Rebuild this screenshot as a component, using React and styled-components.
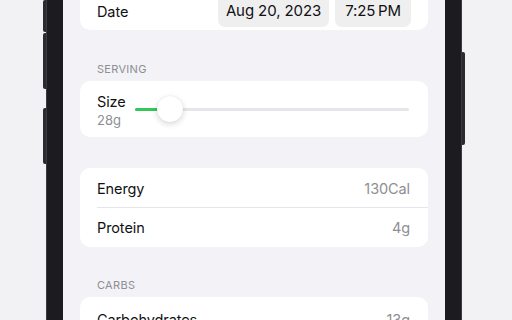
import React from 'react';
import styled, { createGlobalStyle } from 'styled-components';

const GlobalStyle = createGlobalStyle`
    html, body {
        margin: 0;
        padding: 0;
        background-color: #f2f2f4;
    }
    body {
        font-family: Inter, "Noto Sans", "Liberation Sans", sans-serif;
        -webkit-font-smoothing: antialiased;
    }
`;

const Page = styled.div`
    width: 512px;
    height: 320px;
    overflow: hidden;
    display: flex;
    justify-content: flex-start;
    padding-left: 43px;
    box-sizing: border-box;
    background-color: #f2f2f4;
`;

const Rail = styled.div`
    display: flex;
    flex-direction: column;
    width: 3px;
`;

const RailButton = styled.div`
    width: 3px;
    height: ${props => props.size}px;
    margin-top: ${props => props.gap}px;
    background-color: #2a2a2f;
    border-radius: ${props => (props.side === 'left' ? '2px 0 0 2px' : '0 2px 2px 0')};
`;

const Bezel = styled.div`
    display: flex;
    height: 320px;
    background-color: #1c1c1f;
    padding: 0 17px;
    box-shadow: inset 1px 0 0 #3a3a40, inset -1px 0 0 #3a3a40;
`;

const Screen = styled.div`
    width: 382px;
    height: 320px;
    overflow: hidden;
    background-color: #f2f2f7;
`;

const Content = styled.div`
    display: flex;
    flex-direction: column;
    padding: 0 17px;
    margin-top: -13px;
`;

const Card = styled.div`
    background-color: #ffffff;
    border-radius: 10px;
    margin-top: ${props => props.top || 0}px;
    display: flex;
    flex-direction: column;
`;

const Row = styled.div`
    display: flex;
    align-items: center;
    justify-content: space-between;
    height: ${props => props.h || 39}px;
    padding: 0 18px 0 17px;
    position: relative;
    &:not(:last-child)::after {
        content: '';
        position: absolute;
        left: 17px;
        right: 0;
        bottom: 0;
        height: 1px;
        background-color: #e6e6ea;
    }
`;

const Label = styled.span`
    font-size: 14.5px;
    color: #111113;
    letter-spacing: -0.1px;
`;

const Value = styled.span`
    font-size: 14.5px;
    color: #8e8e93;
    letter-spacing: -0.1px;
`;

const SectionHeader = styled.div`
    font-size: 11px;
    color: #8e8e93;
    letter-spacing: 0.3px;
    text-transform: uppercase;
    padding-left: 17px;
    margin-top: 33px;
    margin-bottom: 5px;
    line-height: 13px;
`;

const Pills = styled.div`
    display: flex;
    gap: 6px;
    margin-right: -1px;
`;

const Pill = styled.div`
    background-color: #efeff0;
    border-radius: 7px;
    height: 34px;
    margin-top: 3px;
    width: ${props => props.w}px;
    display: flex;
    align-items: center;
    justify-content: center;
    font-size: 15px;
    letter-spacing: -0.1px;
    color: #111113;
`;

const SizeRow = styled.div`
    display: flex;
    align-items: center;
    height: 56px;
    padding: 0 19px 0 17px;
    gap: 9px;
`;

const SizeText = styled.div`
    display: flex;
    flex-direction: column;
    gap: 2px;
    margin-top: 2px;
`;

const SubValue = styled.span`
    font-size: 13px;
    color: #8e8e93;
`;

const Slider = styled.div`
    flex: 1;
    height: 26px;
    display: flex;
    align-items: center;
    position: relative;
    margin-top: 1px;
`;

const Track = styled.div`
    flex: 1;
    height: 3.5px;
    border-radius: 2px;
    background-color: #e5e5ea;
    position: relative;
    overflow: hidden;
`;

const Fill = styled.div`
    height: 100%;
    background-color: #34c759;
`;

const Thumb = styled.div`
    position: absolute;
    top: -1px;
    width: 26px;
    height: 26px;
    border-radius: 50%;
    background-color: #ffffff;
    box-shadow: 0 2px 6px rgba(0, 0, 0, 0.16), 0 0 1px rgba(0, 0, 0, 0.12);
`;

const SizeSlider = ({ percent }) => (
    <Slider>
        <Track>
            <Fill style={{ width: `${percent}%` }} />
        </Track>
        <Thumb style={{ left: `calc(${percent}% - 2px)` }} />
    </Slider>
);

const App = () => {
    return (
        <>
            <GlobalStyle />
            <Page>
                <Rail>
                    <RailButton side="left" size={32} gap={0} />
                    <RailButton side="left" size={56} gap={1} />
                    <RailButton side="left" size={56} gap={19} />
                </Rail>
                <Bezel>
                    <Screen>
                        <Content>
                            <Card>
                                <Row h={43}>
                                    <Label style={{ marginTop: 6 }}>Date</Label>
                                    <Pills>
                                        <Pill w={111}>Aug 20, 2023</Pill>
                                        <Pill w={76}>7:25&#8201;PM</Pill>
                                    </Pills>
                                </Row>
                            </Card>

                            <SectionHeader>Serving</SectionHeader>
                            <Card>
                                <SizeRow>
                                    <SizeText>
                                        <Label>Size</Label>
                                        <SubValue>28g</SubValue>
                                    </SizeText>
                                    <SizeSlider percent={9} />
                                </SizeRow>
                            </Card>

                            <Card top={31}>
                                <Row h={40}>
                                    <Label>Energy</Label>
                                    <Value>130Cal</Value>
                                </Row>
                                <Row h={39}>
                                    <Label>Protein</Label>
                                    <Value>4g</Value>
                                </Row>
                            </Card>

                            <SectionHeader style={{ marginTop: 32 }}>Carbs</SectionHeader>
                            <Card>
                                <Row h={44}>
                                    <Label>Carbohydrates</Label>
                                    <Value>13g</Value>
                                </Row>
                            </Card>
                        </Content>
                    </Screen>
                </Bezel>
                <Rail>
                    <RailButton side="right" size={93} gap={52} />
                </Rail>
            </Page>
        </>
    );
};

export default App;
